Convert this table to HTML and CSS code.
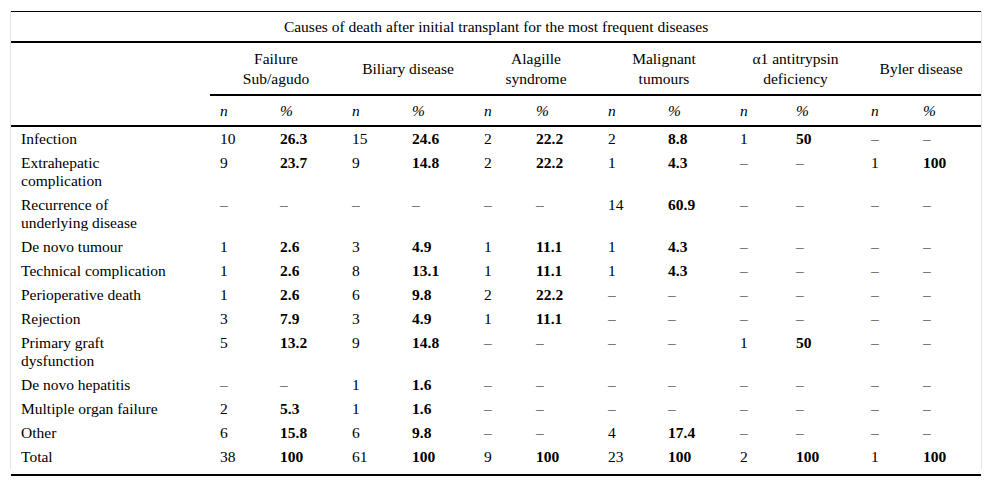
FILE: index.html
```html
<!DOCTYPE html>
<html lang="en">
<head>
<meta charset="utf-8">
<title>Causes of death after initial transplant</title>
<link rel="stylesheet" href="styles.css">
</head>
<body>
<div class="frame">
  <table class="data">
    <colgroup>
      <col class="c-label">
      <col class="c60"><col class="c72">
      <col class="c60"><col class="c72">
      <col class="c52"><col class="c72">
      <col class="c60"><col class="c72">
      <col class="c56"><col class="c75">
      <col class="c52"><col class="c68">
    </colgroup>
    <thead>
      <tr class="title-row">
        <th colspan="13">Causes of death after initial transplant for the most frequent diseases</th>
      </tr>
      <tr class="group-row">
        <th class="blank"></th>
        <th colspan="2">Failure<br>Sub/agudo</th>
        <th colspan="2">Biliary disease</th>
        <th colspan="2">Alagille<br>syndrome</th>
        <th colspan="2">Malignant<br>tumours</th>
        <th colspan="2">α1 antitrypsin<br>deficiency</th>
        <th colspan="2">Byler disease</th>
      </tr>
      <tr class="sub-row">
        <th></th>
        <th>n</th><th>%</th>
        <th>n</th><th>%</th>
        <th>n</th><th>%</th>
        <th>n</th><th>%</th>
        <th>n</th><th>%</th>
        <th>n</th><th>%</th>
      </tr>
    </thead>
    <tbody>
      <tr><td class="lbl"><span>Infection</span></td><td>10</td><td class="b">26.3</td><td>15</td><td class="b">24.6</td><td>2</td><td class="b">22.2</td><td>2</td><td class="b">8.8</td><td>1</td><td class="b">50</td><td>–</td><td>–</td></tr>
      <tr><td class="lbl"><span>Extrahepatic complication</span></td><td>9</td><td class="b">23.7</td><td>9</td><td class="b">14.8</td><td>2</td><td class="b">22.2</td><td>1</td><td class="b">4.3</td><td>–</td><td>–</td><td>1</td><td class="b">100</td></tr>
      <tr><td class="lbl"><span>Recurrence of underlying disease</span></td><td>–</td><td>–</td><td>–</td><td>–</td><td>–</td><td>–</td><td>14</td><td class="b">60.9</td><td>–</td><td>–</td><td>–</td><td>–</td></tr>
      <tr><td class="lbl"><span>De novo tumour</span></td><td>1</td><td class="b">2.6</td><td>3</td><td class="b">4.9</td><td>1</td><td class="b">11.1</td><td>1</td><td class="b">4.3</td><td>–</td><td>–</td><td>–</td><td>–</td></tr>
      <tr><td class="lbl"><span>Technical complication</span></td><td>1</td><td class="b">2.6</td><td>8</td><td class="b">13.1</td><td>1</td><td class="b">11.1</td><td>1</td><td class="b">4.3</td><td>–</td><td>–</td><td>–</td><td>–</td></tr>
      <tr><td class="lbl"><span>Perioperative death</span></td><td>1</td><td class="b">2.6</td><td>6</td><td class="b">9.8</td><td>2</td><td class="b">22.2</td><td>–</td><td>–</td><td>–</td><td>–</td><td>–</td><td>–</td></tr>
      <tr><td class="lbl"><span>Rejection</span></td><td>3</td><td class="b">7.9</td><td>3</td><td class="b">4.9</td><td>1</td><td class="b">11.1</td><td>–</td><td>–</td><td>–</td><td>–</td><td>–</td><td>–</td></tr>
      <tr><td class="lbl"><span>Primary graft dysfunction</span></td><td>5</td><td class="b">13.2</td><td>9</td><td class="b">14.8</td><td>–</td><td>–</td><td>–</td><td>–</td><td>1</td><td class="b">50</td><td>–</td><td>–</td></tr>
      <tr><td class="lbl"><span>De novo hepatitis</span></td><td>–</td><td>–</td><td>1</td><td class="b">1.6</td><td>–</td><td>–</td><td>–</td><td>–</td><td>–</td><td>–</td><td>–</td><td>–</td></tr>
      <tr><td class="lbl"><span>Multiple organ failure</span></td><td>2</td><td class="b">5.3</td><td>1</td><td class="b">1.6</td><td>–</td><td>–</td><td>–</td><td>–</td><td>–</td><td>–</td><td>–</td><td>–</td></tr>
      <tr><td class="lbl"><span>Other</span></td><td>6</td><td class="b">15.8</td><td>6</td><td class="b">9.8</td><td>–</td><td>–</td><td>4</td><td class="b">17.4</td><td>–</td><td>–</td><td>–</td><td>–</td></tr>
      <tr><td class="lbl"><span>Total</span></td><td>38</td><td class="b">100</td><td>61</td><td class="b">100</td><td>9</td><td class="b">100</td><td>23</td><td class="b">100</td><td>2</td><td class="b">100</td><td>1</td><td class="b">100</td></tr>
    </tbody>
  </table>
</div>
<div class="foot-rule"></div>
</body>
</html>
```

FILE: styles.css
```css
html, body {
  margin: 0;
  padding: 0;
  background: #fff;
}

body {
  font-family: "Liberation Serif", "Times New Roman", serif;
  font-size: 15.5px;
  color: #000;
}

.frame {
  margin: 11px 0 0 10px;
  width: 970px;
  border-left: 1px solid #e4e4e4;
  border-right: 1px solid #e4e4e4;
}

.data {
  width: 970px;
  border-collapse: collapse;
  table-layout: fixed;
  border-top: 1px solid #000;
}

.c-label { width: 199px; }
.c60 { width: 60px; }
.c72 { width: 72px; }
.c52 { width: 52px; }
.c56 { width: 56px; }
.c75 { width: 75px; }
.c68 { width: 68px; }

.data th {
  font-weight: normal;
  text-align: center;
  vertical-align: middle;
  line-height: 20px;
  padding: 0 10px;
}

.title-row th {
  height: 29px;
  border-bottom: 2px solid #000;
}

.group-row th {
  height: 51px;
  padding: 0 4px;
  border-bottom: 2px solid #000;
}

.group-row th.blank {
  border-bottom: none;
}

.sub-row th {
  height: 29px;
  text-align: left;
  font-style: italic;
  border-bottom: 2px solid #000;
}

.data td {
  text-align: left;
  vertical-align: top;
  line-height: 18px;
  padding: 3px 10px;
}

.data td.lbl span {
  display: block;
  width: 154px;
}

.data td.b {
  font-weight: bold;
}

.foot-rule {
  margin: 5px 0 0 11px;
  width: 970px;
  border-top: 2px solid #000;
}
```
